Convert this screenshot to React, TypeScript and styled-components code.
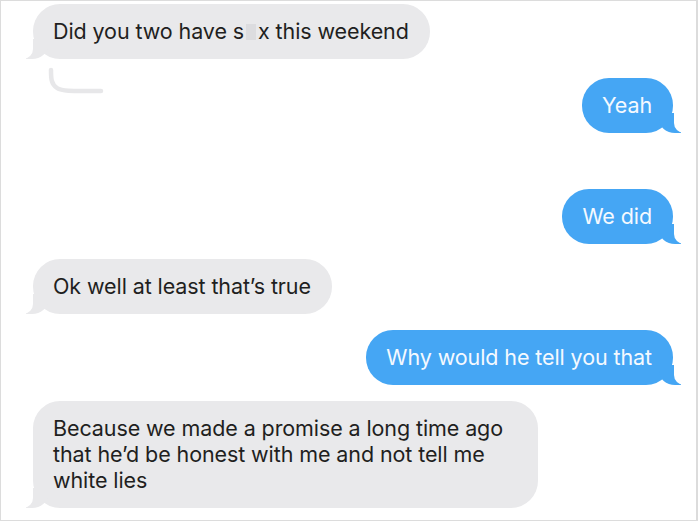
import styled, { createGlobalStyle } from "styled-components";

const GlobalStyle = createGlobalStyle`
  html, body {
    margin: 0;
    padding: 0;
    background: #fff;
  }
  body {
    font-family: "Inter", "Liberation Sans", Arial, sans-serif;
  }
`;

type Side = "in" | "out";

const Frame = styled.div`
  box-sizing: border-box;
  width: 698px;
  height: 521px;
  border: 1px solid #dcdcdc;
  border-right-width: 2px;
  display: flex;
  flex-direction: column;
  padding: 3px 23px 0 32px;
  overflow: hidden;
`;

const Row = styled.div<{ $side: Side; $gap: number }>`
  display: flex;
  justify-content: ${(p) => (p.$side === "in" ? "flex-start" : "flex-end")};
  margin-top: ${(p) => p.$gap}px;
`;

const Bubble = styled.div<{ $side: Side }>`
  position: relative;
  box-sizing: border-box;
  max-width: 505px;
  padding: 14px 21px 15px 20px;
  border-radius: 27px;
  font-size: 21.5px;
  line-height: 26px;
  letter-spacing: -0.1px;
  background: ${(p) => (p.$side === "in" ? "#e9e9eb" : "#45a6f4")};
  color: ${(p) => (p.$side === "in" ? "#1f1f21" : "#f4f9ff")};

  &::before {
    content: "";
    position: absolute;
    bottom: 0;
    ${(p) => (p.$side === "in" ? "left: -7px;" : "right: -8px;")}
    width: 22px;
    height: 20px;
    background: ${(p) => (p.$side === "in" ? "#e9e9eb" : "#45a6f4")};
    ${(p) =>
      p.$side === "in"
        ? "border-bottom-right-radius: 16px 14px;"
        : "border-bottom-left-radius: 16px 14px;"}
  }

  &::after {
    content: "";
    position: absolute;
    bottom: 0;
    ${(p) => (p.$side === "in" ? "left: -12px;" : "right: -13px;")}
    width: 12px;
    height: 22px;
    background: #fff;
    ${(p) =>
      p.$side === "in"
        ? "border-bottom-right-radius: 10px;"
        : "border-bottom-left-radius: 10px;"}
  }
`;

const Censor = styled.span`
  display: inline-block;
  width: 10px;
  height: 16px;
  margin: 0 2px 0 2px;
  vertical-align: -1px;
  background: #dcdcdf;
`;

const ReplyLine = styled.svg`
  position: absolute;
  left: 14px;
  top: 62px;
  overflow: visible;
`;

const App = () => (
  <>
    <GlobalStyle />
    <Frame>
      <Row $side="in" $gap={0}>
        <Bubble $side="in">
          Did you two have s<Censor />x this weekend
          <ReplyLine width="80" height="30" viewBox="0 0 80 30">
            <path
              d="M4 4 C4 12 4 18 10 22 C16 26 30 25 54 25"
              fill="none"
              stroke="#e7e7e9"
              strokeWidth="4.5"
              strokeLinecap="round"
            />
          </ReplyLine>
        </Bubble>
      </Row>
      <Row $side="out" $gap={19}>
        <Bubble $side="out">Yeah</Bubble>
      </Row>
      <Row $side="out" $gap={56}>
        <Bubble $side="out">We did</Bubble>
      </Row>
      <Row $side="in" $gap={15}>
        <Bubble $side="in">Ok well at least that’s true</Bubble>
      </Row>
      <Row $side="out" $gap={16}>
        <Bubble $side="out">Why would he tell you that</Bubble>
      </Row>
      <Row $side="in" $gap={16}>
        <Bubble $side="in">
          Because we made a promise a long time ago that he’d be honest with me
          and not tell me white lies
        </Bubble>
      </Row>
    </Frame>
  </>
);

export default App;
